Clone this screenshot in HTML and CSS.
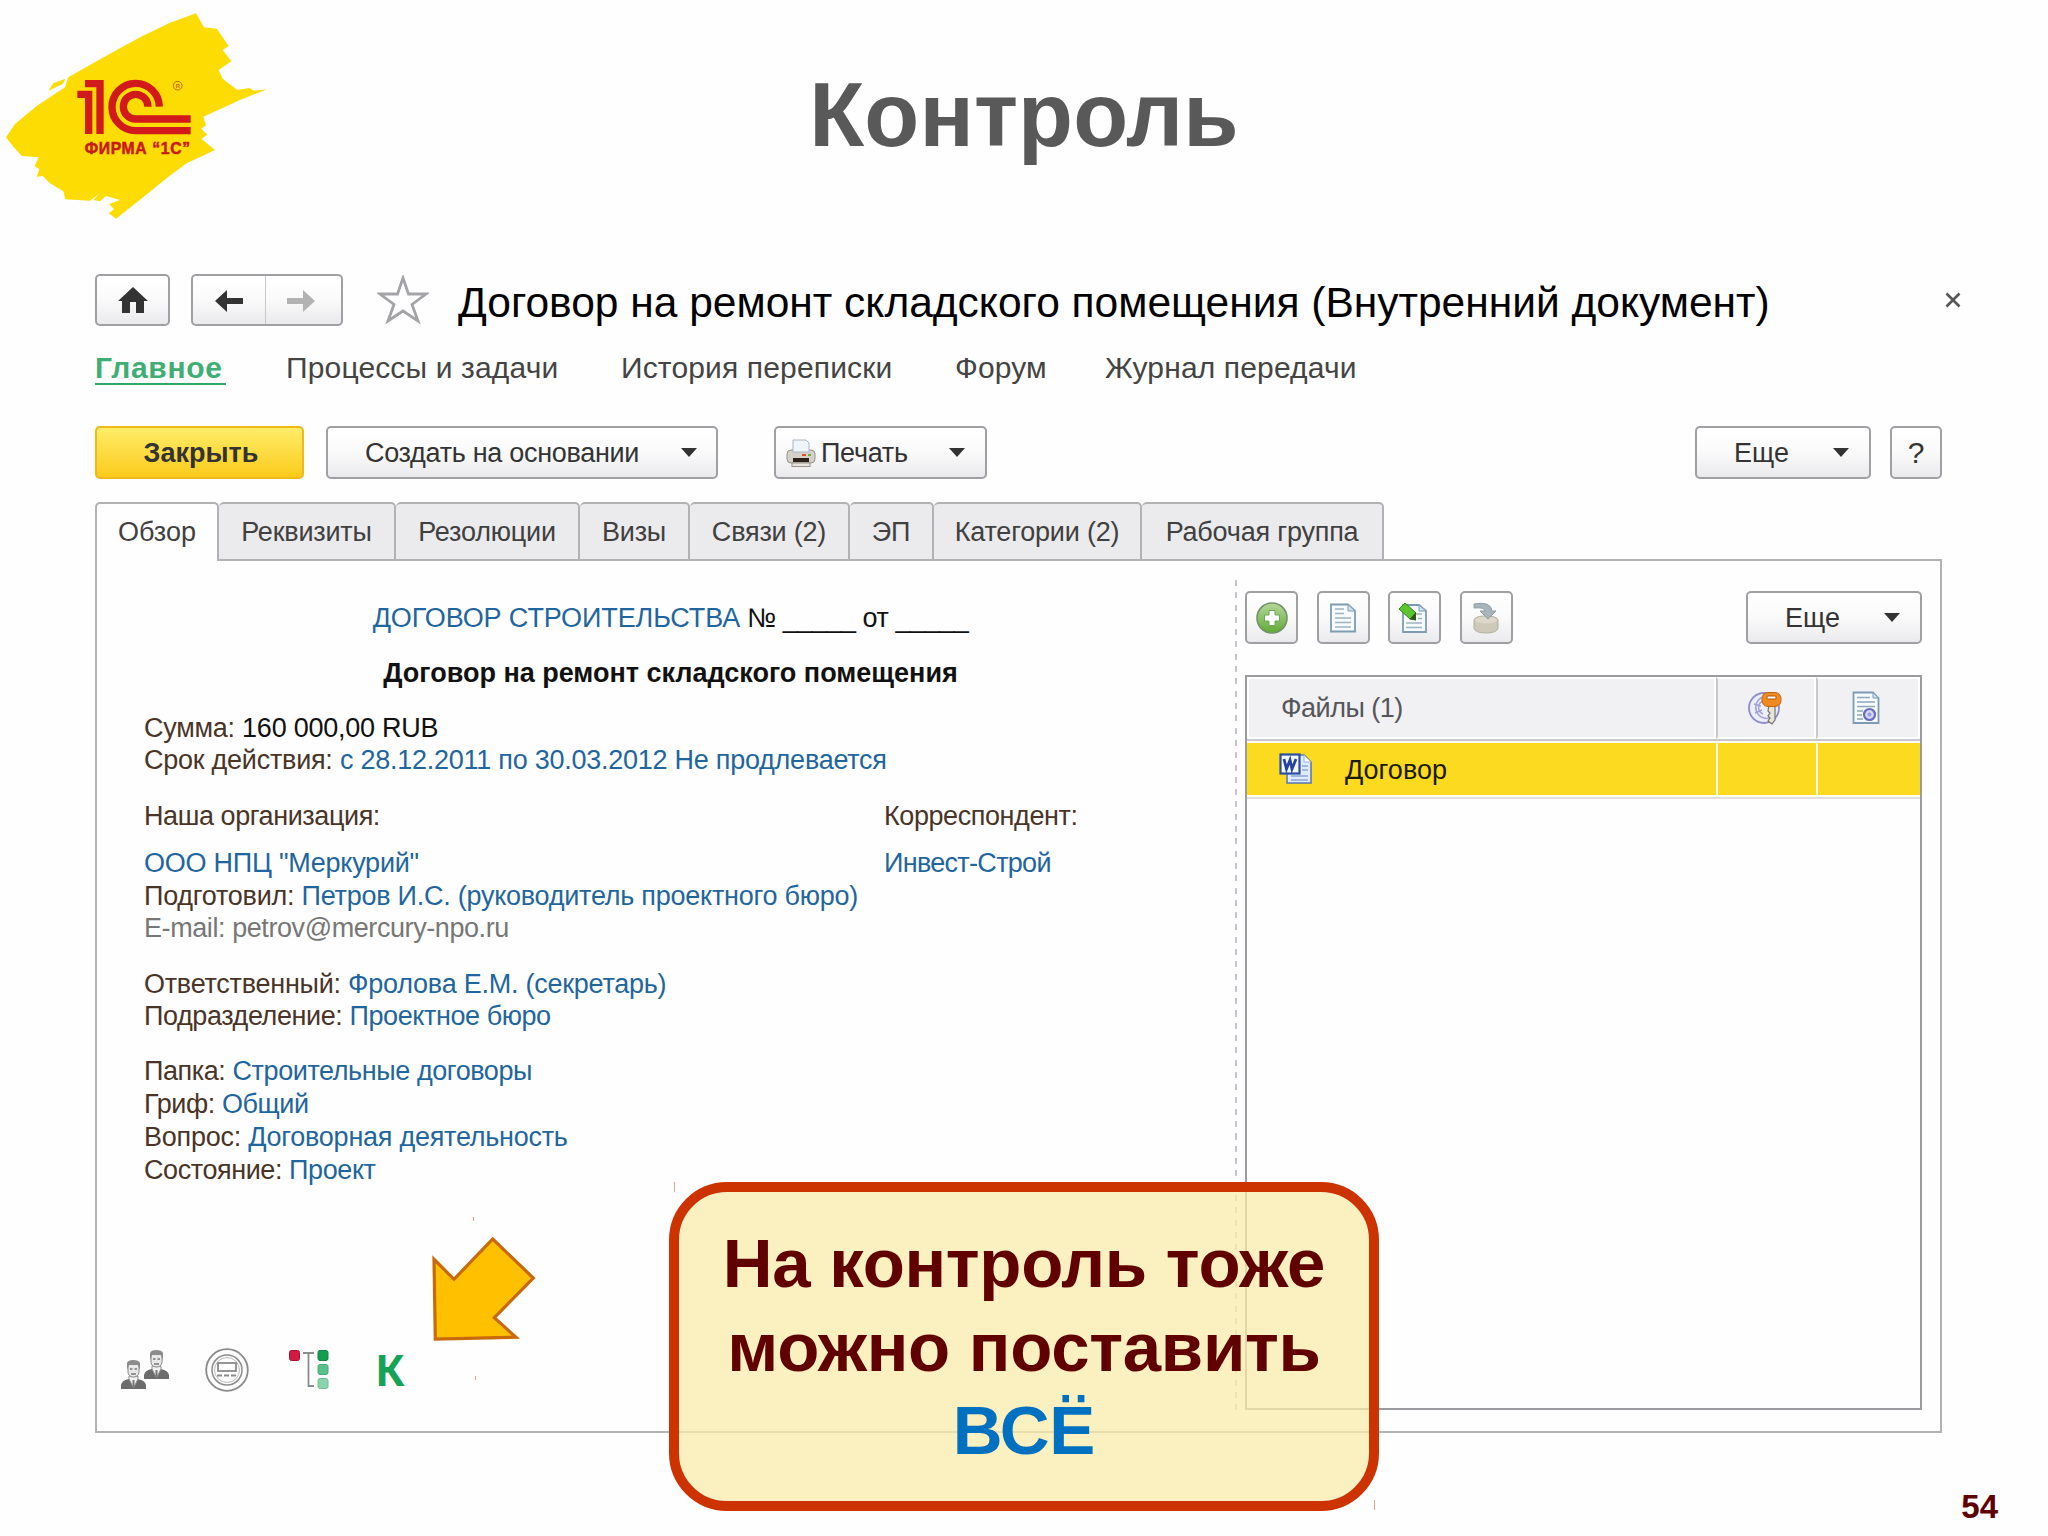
FILE: index.html
```html
<!DOCTYPE html>
<html lang="ru">
<head>
    <meta charset="UTF-8">
    <title>Контроль</title>
    <link rel="stylesheet" href="styles.css">
</head>
<body>
    <div class="slide">
        <header class="slide-header">
            <svg class="logo" viewBox="0 0 900 690">
                <path fill="#fddc04" d="M18 412 L45 372 L110 318 L195 262 L205 232 L300 178 L420 112 L510 68 L588 40 L612 82 L650 86 L686 138 L668 150 L694 184 L656 210 L668 236 L712 270 L748 264 L762 272 L800 268 L720 300 L610 350 L618 376 L604 386 L622 404 L604 416 L645 450 L560 490 L505 530 L450 575 L400 615 L348 656 L326 640 L342 628 L328 612 L360 600 L318 588 L300 604 L280 600 L300 580 L270 602 L196 598 L190 574 L150 550 L128 528 L110 530 L118 508 L104 498 L116 472 L66 468 L40 440 Z"/>
                <path fill="#fddc04" d="M145 272 L160 250 L196 236 L188 252 Z"/>
                <g fill="none" stroke="#d2191b" stroke-width="22">
                    <path d="M232 283 H266 V402"/>
                    <path d="M255 251 H300 V402"/>
                    <path d="M478 320 A71 71 0 1 0 407 392 H572"/>
                    <path d="M444 320 A37 37 0 1 0 407 357 H572"/>
                </g>
                <circle cx="533" cy="257" r="13" fill="none" stroke="#c06a10" stroke-width="3"/>
                <text class="logo-reg" x="527" y="263">R</text>
                <text class="logo-name" x="254" y="462" textLength="316">ФИРМА “1С”</text>
            </svg>
            <h1>Контроль</h1>
        </header>

        <main class="app">
            <div class="titlebar">
                <button class="btn home">
                    <svg width="34" height="28" viewBox="0 0 34 28"><path fill="#333" d="M17 1 L32 15 H28 V27 H20 V16 H14 V27 H6 V15 H2 Z"/></svg>
                </button>
                <div class="btn history">
                    <span class="back"><svg width="30" height="24" viewBox="0 0 30 24"><path fill="#333" d="M1 12 L13 1 V9 H29 V15 H13 V23 Z"/></svg></span>
                    <span class="forward"><svg width="30" height="24" viewBox="0 0 30 24"><path fill="#b3b3b3" d="M29 12 L17 1 V9 H1 V15 H17 V23 Z"/></svg></span>
                </div>
                <svg class="star" width="52" height="50" viewBox="0 0 52 50"><path fill="#fff" stroke="#a3a3a8" stroke-width="2.8" d="M26 3 L31.5 19 L49 19 L35 29.5 L41 46 L26 36 L11 46 L17 29.5 L3 19 L20.5 19 Z"/></svg>
                <h2>Договор на ремонт складского помещения (Внутренний документ)</h2>
                <svg class="close" width="16" height="16" viewBox="0 0 16 16"><path stroke="#555" stroke-width="2.6" d="M1.5 1.5 L14.5 14.5 M14.5 1.5 L1.5 14.5"/></svg>
            </div>

            <nav class="sections">
                <a class="active">Главное</a>
                <a class="s2">Процессы и задачи</a>
                <a class="s3">История переписки</a>
                <a class="s4">Форум</a>
                <a class="s5">Журнал передачи</a>
            </nav>

            <div class="toolbar">
                <button class="btn primary">Закрыть</button>
                <button class="btn create"><span>Создать на основании</span><i class="caret"></i></button>
                <button class="btn print">
                    <svg width="30" height="28" viewBox="0 0 30 28">
                        <rect x="1" y="11" width="28" height="13" rx="4" fill="#d5d0ca" stroke="#99928a"/>
                        <path fill="#eef5fb" stroke="#a9b7c4" d="M7 1 H20 L23 4 V13 H7 Z"/>
                        <rect x="7" y="19" width="16" height="4" fill="#2d211c"/>
                        <rect x="6" y="24" width="18" height="3.5" fill="#e9e6e2" stroke="#99928a"/>
                        <path stroke="#d8542f" stroke-width="2" d="M16 16 H20"/>
                        <path stroke="#6fae3c" stroke-width="2" d="M22 16 H25"/>
                    </svg>
                    <span>Печать</span><i class="caret"></i>
                </button>
                <button class="btn more"><span>Еще</span><i class="caret"></i></button>
                <button class="btn help">?</button>
            </div>

            <div class="tabs">
                <div class="tab active t1">Обзор</div>
                <div class="tab t2">Реквизиты</div>
                <div class="tab t3">Резолюции</div>
                <div class="tab t4">Визы</div>
                <div class="tab t5">Связи (2)</div>
                <div class="tab t6">ЭП</div>
                <div class="tab t7">Категории (2)</div>
                <div class="tab t8">Рабочая группа</div>
            </div>

            <div class="content">
                <section class="overview">
                    <p class="center doc-type"><a>ДОГОВОР СТРОИТЕЛЬСТВА</a> № _____ от _____</p>
                    <p class="center doc-name">Договор на ремонт складского помещения</p>
                    <div class="group">
                        <p>Сумма: <b>160 000,00 RUB</b></p>
                        <p>Срок действия: <a>с 28.12.2011 по 30.03.2012 Не продлевается</a></p>
                    </div>
                    <div class="group">
                        <div class="parties">
                            <p class="tight">Наша организация:</p>
                            <p class="tight">Корреспондент:</p>
                            <p><a>ООО НПЦ "Меркурий"</a></p>
                            <p class="tighter"><a>Инвест-Строй</a></p>
                        </div>
                        <p>Подготовил: <a>Петров И.С. (руководитель проектного бюро)</a></p>
                        <p class="muted tight">E-mail: petrov@mercury-npo.ru</p>
                    </div>
                    <div class="group">
                        <p>Ответственный: <a>Фролова Е.М. (секретарь)</a></p>
                        <p class="tight">Подразделение: <a>Проектное бюро</a></p>
                    </div>
                    <div class="group">
                        <p class="tight">Папка: <a>Строительные договоры</a></p>
                        <p class="tight">Гриф: <a>Общий</a></p>
                        <p>Вопрос: <a>Договорная деятельность</a></p>
                        <p class="tight">Состояние: <a>Проект</a></p>
                    </div>
                    <div class="status-icons">
                        <svg width="48" height="40" viewBox="0 0 48 40">
                            <g id="person">
                                <path fill="#6c6c6c" d="M0 39 V35 Q1 30 8 29 H16 Q24 30 25 35 V39 Z"/>
                                <path fill="#f2f2f2" stroke="#8a8a8a" d="M8 29 L12.5 38 L17 29 V26 H8 Z"/>
                                <rect x="7" y="12" width="11" height="15" rx="5" fill="#e8e8e8" stroke="#888"/>
                                <path fill="#8c8c8c" d="M6 20 V13 Q7 10 12 10 Q18 10 19 13 V20 L17 15 H8 Z"/>
                                <path stroke="#777" stroke-width="1.5" d="M9 19 H11.5 M13.5 19 H16 M10 24 H15"/>
                                <path stroke="#777" stroke-width="2" d="M12.5 30 V38"/>
                            </g>
                            <use href="#person" transform="translate(23 -10)"/>
                        </svg>
                        <svg class="stamp" width="44" height="44" viewBox="0 0 44 44" fill="none" stroke="#8b8b8b">
                            <circle cx="22" cy="22" r="20.8" stroke-width="1.8"/>
                            <circle cx="22" cy="22" r="15" stroke-width="1.5"/>
                            <circle cx="22" cy="22" r="12.5" stroke="#b9b9b9"/>
                            <rect x="13" y="15" width="18" height="8" fill="#fff" stroke-width="1.8"/>
                            <path stroke-width="1.8" stroke-dasharray="5 2" d="M12 27.5 H32"/>
                        </svg>
                        <svg class="tree" width="40" height="40" viewBox="0 0 40 40">
                            <rect x="0.5" y="0.5" width="10" height="10" rx="2" fill="#d31a42" stroke="#a8102f"/>
                            <path fill="none" stroke="#8c8c8c" stroke-width="1.8" d="M14 3 H25 M19.5 3 V36 H25"/>
                            <rect x="29" y="0.5" width="10" height="10" rx="2" fill="#149c50" stroke="#0d8442"/>
                            <rect x="29" y="14.5" width="10" height="10" rx="2" fill="#5cc08c" stroke="#45ac77"/>
                            <rect x="29" y="28.5" width="10" height="10" rx="2" fill="#8bd3ae" stroke="#72c09a"/>
                        </svg>
                        <span class="control">К</span>
                    </div>
                </section>

                <section class="files">
                    <div class="files-bar">
                        <button class="btn icon">
                            <svg width="34" height="34" viewBox="0 0 34 34">
                                <defs><linearGradient id="green" x2="0" y2="1"><stop offset="0" stop-color="#b5d79b"/><stop offset="1" stop-color="#62aa35"/></linearGradient></defs>
                                <circle cx="17" cy="17" r="15" fill="url(#green)" stroke="#74906a" stroke-width="1.6"/>
                                <path d="M14 9.5 H20 V14 H24.5 V20 H20 V24.5 H14 V20 H9.5 V14 H14 Z" fill="#fff" stroke="#6da850"/>
                            </svg>
                        </button>
                        <button class="btn icon">
                            <svg width="28" height="30" viewBox="0 0 28 30">
                                <path fill="#f7fbff" stroke="#7d9cb3" stroke-width="1.8" d="M2 1.5 H19 L26 8 V28.5 H2 Z"/>
                                <path fill="#d3e2ee" stroke="#7d9cb3" d="M19 1.5 V8 H26 Z"/>
                                <path stroke="#9db4c5" stroke-width="1.6" d="M6 6 H15 M6 10.5 H15 M6 15 H22 M6 19.5 H22 M6 24 H22"/>
                            </svg>
                        </button>
                        <button class="btn icon">
                            <svg class="edit" width="30" height="32" viewBox="0 0 30 32">
                                <path fill="#f7fbff" stroke="#7d9cb3" stroke-width="1.8" d="M5 3 H21 L28 9 V30 H5 Z"/>
                                <path fill="#d3e2ee" stroke="#7d9cb3" d="M21 3 V9 H28 Z"/>
                                <path stroke="#9db4c5" stroke-width="1.6" d="M17 12 H24 M20 16.5 H24 M8 21 H24 M8 25.5 H24"/>
                                <path fill="#5cc52d" stroke="#2f8a14" d="M1 7 L7 1 L18 11 L12 17 Z"/>
                                <path fill="#2d5a17" d="M18 10 V18.5 L11.5 17.5 Z"/>
                            </svg>
                        </button>
                        <button class="btn icon">
                            <svg width="28" height="32" viewBox="0 0 28 32">
                                <path fill="#cfc9ba" stroke="#b4ae9f" d="M2 18 Q3 14 14 14 Q25 14 26 18 V26 Q25 31 14 31 Q3 31 2 26 Z"/>
                                <ellipse cx="14" cy="18" rx="11" ry="3.5" fill="#ddd8cb"/>
                                <path fill="#a9b5bc" stroke="#919da5" d="M2 2 Q19 -1 20 9 H24 L16 17 L8 9 H13 Q13 5 2 6 Z"/>
                            </svg>
                        </button>
                        <button class="btn more"><span>Еще</span><i class="caret"></i></button>
                    </div>
                    <div class="table">
                        <div class="row head">
                            <div class="cell">Файлы (1)</div>
                            <div class="cell mark">
                                <svg width="34" height="34" viewBox="0 0 34 34">
                                    <circle cx="16" cy="17" r="15" fill="#eeeefa" stroke="#8d8bcb" stroke-width="1.8"/>
                                    <path fill="none" stroke="#a3a2d8" stroke-width="1.5" d="M15 6 A11 11 0 1 0 24 26 M15 10 A7 7 0 0 0 15 23 M6 13 L13 15 M7 22 L14 19"/>
                                    <path fill="#e8e5d6" stroke="#75756a" stroke-width="1.2" d="M21 14 H27 V29 L24 33 L20 30 L22 27 L20 25 L22 22 L20 20 Z"/>
                                    <rect x="14" y="1.5" width="19" height="14" rx="6" fill="#f08a20" stroke="#c1640f"/>
                                    <rect x="19" y="5" width="9" height="3" rx="1" fill="#fff" stroke="#a9560e"/>
                                </svg>
                            </div>
                            <div class="cell mark">
                                <svg width="28" height="34" viewBox="0 0 28 34">
                                    <path fill="#f7fbff" stroke="#7d9cb3" stroke-width="1.8" d="M1.5 1.5 H21 L26.5 7 V32 H1.5 Z"/>
                                    <path fill="#d3e2ee" stroke="#7d9cb3" d="M21 1.5 V7 H26.5 Z"/>
                                    <path stroke="#8fa9bb" stroke-width="1.6" d="M5 6.5 H18 M5 11 H23 M5 15.5 H23 M5 20 H11 M5 24 H10 M5 28 H11"/>
                                    <circle cx="17.5" cy="23.5" r="5.5" fill="#d4d6f5" stroke="#6a6bc4" stroke-width="2.2"/>
                                    <circle cx="17.5" cy="23.5" r="2" fill="#9a9be0"/>
                                </svg>
                            </div>
                        </div>
                        <div class="row selected">
                            <div class="cell">
                                <svg width="34" height="34" viewBox="0 0 34 34">
                                    <path fill="#dfeafc" stroke="#5475b8" stroke-width="1.5" d="M8 3 H25 L32 10 V31 H8 Z"/>
                                    <path fill="#fff" stroke="#9db3dd" d="M25 3 V10 H32 Z"/>
                                    <path stroke="#8ba6d6" stroke-width="1.5" d="M23 14 H29 M23 18 H29 M12 24 H29 M12 28 H29"/>
                                    <rect x="1.5" y="2.5" width="19" height="19" fill="#f2f6ff" stroke="#2a4f9e" stroke-width="2.2"/>
                                    <path fill="none" stroke="#24459a" stroke-width="2.8" d="M5 7 L7.5 17 L11 8 L13 17 L17 7"/>
                                </svg>
                                <span>Договор</span>
                            </div>
                            <div class="cell"></div>
                            <div class="cell"></div>
                        </div>
                    </div>
                </section>
            </div>
        </main>

        <svg class="arrow" width="110" height="110" viewBox="0 0 110 110"><path fill="#ffc000" stroke="#c8690a" stroke-width="3.2" d="M62.7 4 L103.3 43 L64.3 82.7 L86 102.3 L5.3 104 L4 24.3 L24 44.3 Z"/></svg>
        <i class="tick tick-a"></i>
        <i class="tick tick-b"></i>
        <i class="tick tick-c"></i>
        <i class="tick tick-d"></i>
        <div class="callout">На контроль тоже<br>можно поставить<br><em>ВСЁ</em></div>
        <div class="page-number">54</div>
    </div>
</body>
</html>
```
FILE: styles.css
```css
* {
    box-sizing: border-box;
}

body {
    margin: 0;
    background: #fefefe;
    font-family: "Liberation Sans", Arial, sans-serif;
}

h1, h2, p {
    margin: 0;
}

.slide {
    position: relative;
    width: 2048px;
    height: 1536px;
    overflow: hidden;
}

/* Slide header */
.slide-header {
    display: flex;
    height: 274px;
}

.logo {
    width: 300px;
    height: 230px;
}

.logo-name {
    font-size: 47px;
    font-weight: bold;
    fill: #c8191b;
    stroke: #c8191b;
    stroke-width: 1.5px;
}

.logo-reg {
    font-size: 17px;
    font-weight: bold;
    fill: #c06a10;
}

h1 {
    width: 1448px;
    padding-top: 65px;
    text-align: center;
    font-size: 90px;
    line-height: 100px;
    letter-spacing: 0.1px;
    color: #595959;
}

/* Application window */
.app {
    width: 1847px;
    margin-left: 95px;
}

.btn {
    display: flex;
    align-items: center;
    flex: none;
    height: 53px;
    padding: 0;
    border: 2px solid #a0a0a4;
    border-radius: 5px;
    background: linear-gradient(#fff, #fafafb 50%, #eaeaec);
    font-family: inherit;
    font-size: 27px;
    color: #333;
    white-space: nowrap;
}

.btn span {
    padding-top: 2px;
}

.caret {
    flex: none;
    border: 8px solid transparent;
    border-top: 9px solid #333;
    border-bottom: 0;
}

.titlebar {
    display: flex;
    height: 52px;
    white-space: nowrap;
}

.home {
    width: 75px;
    height: 52px;
    justify-content: center;
}

.history {
    width: 152px;
    height: 52px;
    margin-left: 21px;
}

.back, .forward {
    display: flex;
    flex: 1;
    align-items: center;
    justify-content: center;
    height: 100%;
}

.forward {
    padding-right: 4px;
    border-left: 1px solid #c8c8ca;
}

.star {
    flex: none;
    margin: 1px 0 0 34px;
}

h2 {
    flex: none;
    width: 1312px;
    margin-left: 29px;
    padding-top: 3px;
    font-size: 42.5px;
    line-height: 52px;
    font-weight: normal;
    color: #000;
}

.close {
    flex: none;
    margin: 18px 0 0 175px;
}

.sections {
    display: flex;
    height: 100px;
    padding-top: 24px;
    font-size: 30px;
    line-height: 35px;
    letter-spacing: 0.15px;
    color: #444;
    white-space: nowrap;
}

.sections a {
    height: 35px;
}

.sections .active {
    width: 131px;
    border-bottom: 2px solid #2fa86a;
    font-weight: bold;
    letter-spacing: 0.7px;
    color: #3fae75;
}

.s2 { margin-left: 60px; width: 274px; }
.s3 { margin-left: 61px; width: 272px; }
.s4 { margin-left: 62px; width: 89px; }
.s5 { margin-left: 61px; }

.toolbar {
    display: flex;
    height: 76px;
}

.primary {
    width: 209px;
    padding: 2px 0 0 3px;
    justify-content: center;
    border-color: #efb91c;
    background: linear-gradient(#ffec69, #fbcb1b);
    font-weight: bold;
}

.create {
    width: 392px;
    margin-left: 22px;
    padding: 0 19px 0 37px;
    justify-content: space-between;
    letter-spacing: -0.3px;
}

.print {
    width: 213px;
    margin-left: 56px;
    padding: 0 20px 0 10px;
}

.print span {
    margin-left: 5px;
    letter-spacing: -0.3px;
}

.print .caret {
    margin-left: auto;
}

.more {
    width: 176px;
    margin-left: auto;
    padding: 0 20px 0 37px;
    justify-content: space-between;
}

.help {
    width: 52px;
    margin-left: 19px;
    justify-content: center;
    font-size: 30px;
}

/* Tabs */
.tabs {
    display: flex;
    height: 57px;
}

.tab {
    height: 59px;
    padding-top: 10px;
    border: 2px solid #b2b2b5;
    border-left-width: 0;
    border-radius: 5px 5px 0 0;
    background: #ebeaec;
    text-align: center;
    font-size: 27px;
    line-height: 36px;
    letter-spacing: -0.2px;
    color: #404040;
    white-space: nowrap;
}

.tab.active {
    position: relative;
    border-left-width: 2px;
    border-bottom: 0;
    background: #fefefe;
    letter-spacing: 0;
}

.t1 { width: 124px; }
.t2 { width: 177px; }
.t3 { width: 184px; }
.t4 { width: 110px; }
.t5 { width: 160px; }
.t6 { width: 84px; }
.t7 { width: 208px; }
.t8 { width: 242px; }

.content {
    display: flex;
    height: 874px;
    border: 2px solid #b2b2b5;
}

/* Document overview */
.overview {
    display: flex;
    flex-direction: column;
    gap: 22.3px;
    width: 1138px;
    padding: 40.5px 38px 39px 47px;
    font-size: 27px;
    line-height: 32.8px;
    letter-spacing: -0.25px;
    color: #4a3428;
    white-space: nowrap;
}

.overview a {
    color: #1f669f;
}

.overview b {
    font-weight: normal;
    color: #111;
}

.tight {
    letter-spacing: -0.42px;
}

.tighter {
    letter-spacing: -0.7px;
}

.center {
    text-align: center;
    color: #111;
}

.doc-type {
    letter-spacing: -0.45px;
}

.doc-type a {
    letter-spacing: -0.1px;
}

.doc-name {
    font-weight: bold;
    letter-spacing: 0;
}

.muted {
    color: #777;
}

.parties {
    display: grid;
    grid-template-columns: 740px 1fr;
    row-gap: 14.500px;
}

.status-icons {
    display: flex;
    align-items: center;
    height: 44px;
    margin: auto 0 0 -23px;
}

.stamp { margin-left: 36px; }
.tree { margin-left: 40px; }

.control {
    margin-left: 46px;
    font-family: "Noto Sans", "Open Sans", sans-serif;
    font-size: 43px;
    line-height: 44px;
    font-weight: bold;
    color: #15a356;
}

/* Files panel */
.files {
    flex: 1;
    margin-top: 19px;
    padding: 11px 18px 0 10px;
    background: repeating-linear-gradient(#c6c6cc 0 6px, transparent 6px 12.3px) 0 0 / 2px 830px no-repeat;
}

.files-bar {
    display: flex;
    height: 84px;
}

.icon {
    width: 53px;
    margin-right: 18.6px;
    justify-content: center;
}

.icon .edit {
    margin-right: 4px;
}

.table {
    height: 735px;
    border: 2px solid #9c9ca0;
}

.row {
    display: grid;
    grid-template-columns: 1fr 100px 104px;
}

.head {
    height: 64px;
    border-bottom: 2px solid #c9c9cc;
    font-size: 27px;
    letter-spacing: -0.5px;
    color: #55555a;
}

.cell {
    display: flex;
    align-items: center;
}

.head .cell {
    padding-left: 32px;
    border: 2px solid #fff;
    background: #f1f0f2;
}

.head .mark {
    padding: 0 3px 0 0;
    border-left: 2px solid #c9c9cc;
    justify-content: center;
}

.head .mark + .mark {
    padding-right: 5px;
}

.selected {
    grid-template-columns: 1fr 98px 102px;
    height: 58px;
    padding: 2px 0;
    column-gap: 2px;
    border-bottom: 2px solid #e0e0e0;
    background: #fffef0;
    font-size: 27px;
    color: #1a1a00;
}

.selected .cell {
    padding-left: 32px;
    background: #fbda1f;
}

.selected span {
    margin-left: 32px;
    padding-top: 3px;
}

/* Slide annotations */
.arrow {
    position: absolute;
    left: 430px;
    top: 1235px;
}

.callout {
    position: absolute;
    left: 669px;
    top: 1182px;
    width: 710px;
    height: 329px;
    padding-top: 30px;
    border: 10px solid #cc3300;
    border-radius: 58px;
    background: rgba(250, 235, 170, 0.75);
    background-clip: padding-box;
    text-align: center;
    font-size: 69px;
    line-height: 83.5px;
    letter-spacing: -0.3px;
    font-weight: bold;
    color: #600000;
    white-space: nowrap;
}

.callout em {
    font-style: normal;
    color: #0070c0;
}

.tick {
    position: absolute;
    width: 1px;
    background: #dba58f;
}

.tick-a { left: 473px; top: 1217px; height: 4px; }
.tick-b { left: 475px; top: 1376px; height: 4px; }
.tick-c { left: 674px; top: 1182px; height: 10px; }
.tick-d { left: 1374px; top: 1500px; height: 10px; }

.page-number {
    position: absolute;
    right: 50px;
    top: 1488px;
    font-size: 33px;
    line-height: 38px;
    font-weight: bold;
    color: #600000;
}
```
